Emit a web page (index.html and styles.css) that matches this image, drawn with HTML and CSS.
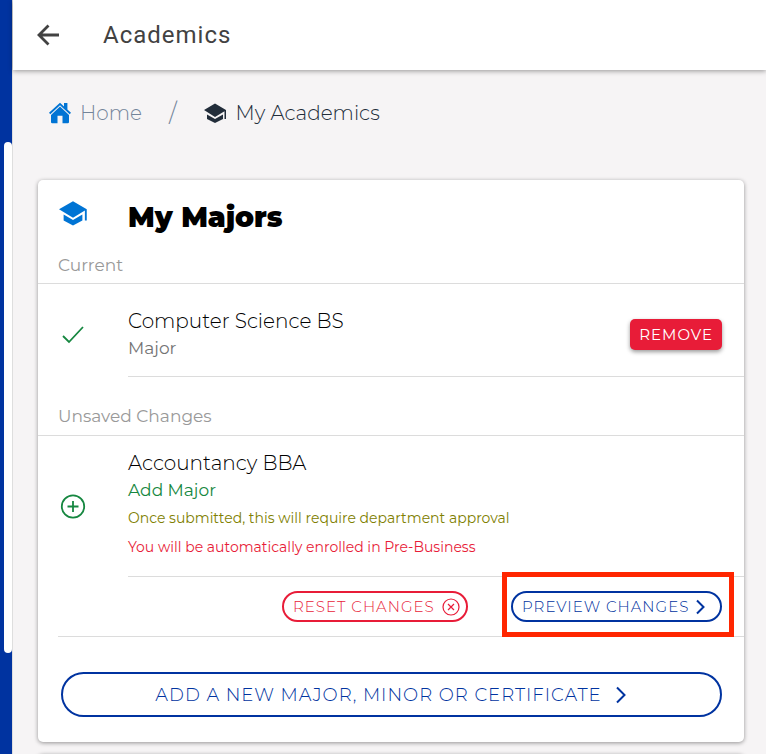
FILE: index.html
```html
<!DOCTYPE html>
<html lang="en">
<head>
    <meta charset="UTF-8">
    <title>Academics</title>
    <meta name="viewport" content="width=device-width, initial-scale=1">
    <link rel="stylesheet" href="styles.css">
</head>
<body>
    <div class="side-rail"><div class="side-thumb"></div></div>
    <div class="page">
        <header class="toolbar">
            <button type="button" class="back-btn" aria-label="Back">
                <svg width="24" height="24" viewBox="0 0 24 24" fill="none" stroke="currentColor" stroke-width="2.8"><path d="M23 12H3M12.500 2.500L3 12l9.500 9.500"/></svg>
            </button>
            <h1>Academics</h1>
        </header>

        <nav class="breadcrumb">
            <a href="#" class="crumb">
                <svg class="home-icon" width="22" height="22" viewBox="0 0 22 22" fill="currentColor"><path d="M11 .8L0 10.800l1.300 1.400L11 3.200l9.700 9 1.300-1.400-3.600-3.300V1H15v3.400z"/><path d="M11 4.600l-9 8.300V20q0 1.200 1.200 1.200h5.300v-7.400h5v7.400h5.300q1.200 0 1.200-1.200v-7.100z"/></svg>
                Home
            </a>
            <span class="separator">/</span>
            <a href="#" class="crumb current">
                <svg width="24" height="24" viewBox="0 0 24 24" fill="currentColor"><path d="M4 13.500v4.500L12 22l8-4v-4.500L12 18zM12 2.500L1 9l11 7 9.500-5.800V18H23V9z"/></svg>
                My Academics
            </a>
        </nav>

        <main>
            <section class="card">
                <div class="card-title">
                    <svg class="cap-icon" width="30" height="30" viewBox="0 0 24 24" fill="currentColor"><path d="M4.500 13.200v4.800L12 22l7.500-4v-4.800L12 17.500zM12 2.500L.8 9l11.200 6.800L21.500 10v8H23V9z"/></svg>
                    <h2>My Majors</h2>
                </div>

                <h3 class="list-header">Current</h3>
                <div class="item">
                    <svg class="item-icon" width="30" height="30" viewBox="0 0 30 30" fill="none" stroke="currentColor" stroke-width="1.8"><path d="M5 20l6 6L25 11"/></svg>
                    <div class="item-body current-major">
                        <div class="item-text">
                            <p class="name">Computer Science BS</p>
                            <p class="kind">Major</p>
                        </div>
                        <button type="button" class="remove-btn">REMOVE</button>
                    </div>
                </div>

                <h3 class="list-header spaced">Unsaved Changes</h3>
                <div class="item">
                    <svg class="item-icon" width="30" height="30" viewBox="0 0 30 30" fill="none" stroke="currentColor" stroke-width="1.8"><circle cx="15" cy="14.500" r="11.200"/><path d="M9.500 14.500h11M15 9v11"/></svg>
                    <div class="item-body new-major">
                        <div class="item-text">
                            <p class="name">Accountancy BBA</p>
                            <p class="kind add">Add Major</p>
                            <p class="note approval">Once submitted, this will require department approval</p>
                            <p class="note enroll">You will be automatically enrolled in Pre-Business</p>
                        </div>
                    </div>
                </div>

                <div class="actions">
                    <button type="button" class="pill reset">
                        RESET CHANGES
                        <svg width="18" height="18" viewBox="0 0 18 18" fill="none" stroke="currentColor" stroke-width="1.200"><circle cx="9" cy="9" r="8"/><path d="M6 6l6 6M12 6l-6 6"/></svg>
                    </button>
                    <div class="highlighted">
                        <button type="button" class="pill preview">
                            PREVIEW CHANGES
                            <svg width="12" height="16" viewBox="0 0 12 16" fill="none" stroke="currentColor" stroke-width="2"><path d="M1 1.500L7.500 8 1 14.500"/></svg>
                        </button>
                    </div>
                </div>

                <div class="add-row">
                    <button type="button" class="pill add-btn">
                        ADD A NEW MAJOR, MINOR OR CERTIFICATE
                        <svg width="12" height="18" viewBox="0 0 12 18" fill="none" stroke="currentColor" stroke-width="2"><path d="M1 1.500L8.500 9 1 16.500"/></svg>
                    </button>
                </div>
            </section>
            <section class="card next-card"></section>
        </main>
    </div>
</body>
</html>
```
FILE: styles.css
```css
* {
    box-sizing: border-box;
}
body {
    margin: 0;
    height: 100vh;
    display: flex;
    overflow: hidden;
    font-family: Montserrat, Inter, "Liberation Sans", sans-serif;
    font-weight: 300;
    color: #000;
    background: #f6f4f5;
}
h1, h2, h3, p {
    margin: 0;
}
button {
    font-family: inherit;
    cursor: pointer;
}
svg {
    flex: none;
}
.side-rail {
    flex: none;
    display: flex;
    width: 12px;
    padding: 142px 0 101px 4px;
    background: #0033a0;
}
.side-thumb {
    flex: 1;
    background: #fff;
    border-radius: 4px;
}
.page {
    flex: 1;
    min-width: 0;
    border-left: 1px solid #dedede;
}
.toolbar {
    display: flex;
    align-items: center;
    gap: 43px;
    height: 70px;
    padding-left: 23px;
    background: #fff;
    box-shadow: 0 1px 5px rgba(0, 0, 0, 0.4);
}
.back-btn {
    display: flex;
    padding: 0;
    border: none;
    background: none;
    color: #424242;
}
.toolbar h1 {
    font-family: Roboto, sans-serif;
    font-size: 24px;
    font-weight: 400;
    letter-spacing: 1px;
    color: #424242;
}
.breadcrumb {
    display: flex;
    align-items: center;
    height: 86px;
    padding-left: 36px;
    font-size: 20px;
}
.crumb {
    display: flex;
    align-items: center;
    gap: 9px;
    color: #73849a;
    text-decoration: none;
}
.crumb.current {
    color: #222d3a;
}
.home-icon {
    color: #0074d4;
}
.separator {
    margin: 0 26px 0 27px;
    font-size: 24px;
    color: #73849a;
}
main {
    padding: 24px 22px 0 25px;
}
.card {
    margin-bottom: 12px;
    background: #fff;
    border-radius: 5px;
    box-shadow: 0 1px 4px rgba(0, 0, 0, 0.4);
}
.next-card {
    height: 120px;
}
.card-title {
    display: flex;
    align-items: center;
    height: 73px;
    padding-left: 20px;
    gap: 40px;
}
.cap-icon {
    margin-bottom: 8px;
    color: #0074d4;
}
.card-title h2 {
    font-size: 28px;
    font-weight: 900;
}
.list-header {
    padding: 0 20px 6px;
    border-bottom: 1px solid #dcdcdc;
    font-size: 17px;
    font-weight: 400;
    line-height: 24px;
    color: #999;
}
.list-header.spaced {
    padding-top: 27px;
    padding-bottom: 7px;
}
.item {
    display: flex;
    align-items: center;
    gap: 40px;
    padding-left: 20px;
}
.item-icon {
    color: #168740;
}
.item-body {
    flex: 1;
    display: flex;
    align-items: center;
    justify-content: space-between;
    padding-right: 22px;
    border-bottom: 1px solid #dcdcdc;
}
.current-major {
    height: 93px;
    padding-top: 9px;
}
.current-major .remove-btn {
    margin-bottom: 1px;
}
.new-major {
    padding-top: 13px;
    padding-bottom: 14px;
}
.name {
    font-size: 20px;
    line-height: 28px;
}
.kind {
    font-size: 17px;
    font-weight: 400;
    line-height: 27px;
    color: #737373;
}
.kind.add {
    color: #168740;
}
.note {
    font-size: 14px;
    font-weight: 400;
    line-height: 29px;
}
.approval {
    color: #808000;
}
.enroll {
    color: #e81c38;
}
.remove-btn {
    height: 31px;
    padding: 0 9px;
    border: none;
    border-radius: 5px;
    background: #e81c38;
    box-shadow: 0 2px 4px rgba(0, 0, 0, 0.4);
    color: #fff;
    font-size: 15px;
    font-weight: 400;
    letter-spacing: 1px;
}
.actions {
    display: flex;
    justify-content: flex-end;
    gap: 43px;
    margin-left: 20px;
    padding: 14px 22px 14px 0;
    border-bottom: 1px solid #dcdcdc;
}
.pill {
    display: flex;
    align-items: center;
    justify-content: space-between;
    height: 31px;
    padding: 0 9px;
    border: 2px solid #0033a0;
    border-radius: 23px;
    background: #fff;
    color: #0033a0;
    font-size: 15px;
    font-weight: 300;
    letter-spacing: 1px;
}
.pill.reset {
    width: 186px;
    padding-right: 6px;
    border-color: #e81c38;
    color: #e81c38;
}
.pill.preview {
    width: 211px;
    padding-right: 12px;
}
.highlighted {
    position: relative;
}
/* callout frame around the preview button */
.highlighted::after {
    content: "";
    position: absolute;
    inset: -19px -12px -15px -9px;
    border: 5px solid #ff2600;
    pointer-events: none;
}
.add-row {
    padding: 35px 22px 25px 23px;
}
.pill.add-btn {
    justify-content: center;
    gap: 14px;
    width: 100%;
    height: 45px;
    font-size: 18px;
}
```
